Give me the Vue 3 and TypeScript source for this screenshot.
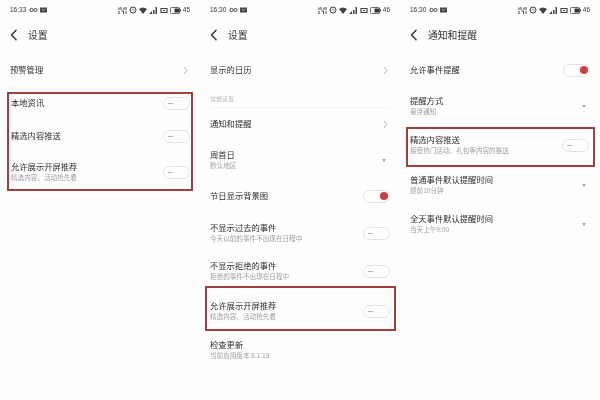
<script setup lang="ts">
type Kind = 'chev' | 'drop' | 'off' | 'on' | 'none'
interface Row { t: string; s?: string; k: Kind; h: number }
interface Phone {
  time: string; batt: string; title: string; cls: string
  before: (Row | { section: string })[]
  box: Row[]
  after: (Row | { section: string })[]
}
const phones: Phone[] = [
  {
    time: '16:33', batt: '45', title: '设置', cls: 'p1',
    before: [{ t: '预警管理', k: 'chev', h: 36 }],
    box: [
      { t: '本地资讯', k: 'off', h: 18 },
      { t: '精选内容推送', k: 'off', h: 48 },
      { t: '允许展示开屏推荐', s: '精选内容、活动抢先看', k: 'off', h: 25 }
    ],
    after: []
  },
  {
    time: '16:30', batt: '46', title: '设置', cls: 'p2',
    before: [
      { t: '显示的日历', k: 'chev', h: 36 },
      { section: '常规设置' },
      { t: '通知和提醒', k: 'chev', h: 28 },
      { t: '周首日', s: '默认地区', k: 'drop', h: 44 },
      { t: '节日显示背景图', k: 'on', h: 28 },
      { t: '不显示过去的事件', s: '今天以前的事件不出现在日程中', k: 'off', h: 46 },
      { t: '不显示拒绝的事件', s: '拒绝的事件不出现在日程中', k: 'off', h: 30 }
    ],
    box: [{ t: '允许展示开屏推荐', s: '精选内容、活动抢先看', k: 'off', h: 36 }],
    after: [{ t: '检查更新', s: '当前应用版本 8.1.18', k: 'none', h: 39 }]
  },
  {
    time: '16:30', batt: '46', title: '通知和提醒', cls: 'p3',
    before: [
      { t: '允许事件提醒', k: 'on', h: 36 },
      { t: '提醒方式', s: '悬浮通知', k: 'drop', h: 36 }
    ],
    box: [{ t: '精选内容推送', s: '接受热门活动、礼包等内容的推送', k: 'off', h: 33 }],
    after: [
      { t: '普通事件默认提醒时间', s: '提前10分钟', k: 'drop', h: 36 },
      { t: '全天事件默认提醒时间', s: '当天上午9:00', k: 'drop', h: 42 }
    ]
  }
]
const isSection = (r: Row | { section: string }): r is { section: string } => 'section' in r
const asRow = (r: Row | { section: string }) => r as Row
const asSection = (r: Row | { section: string }) => (r as { section: string }).section
</script>

<template>
  <div class="screen">
    <section v-for="p in phones" :key="p.cls" class="phone" :class="p.cls">
      <div class="status">
        <span class="time">{{ p.time }}</span>
        <svg width="9" height="6" viewBox="0 0 9 6" class="inf"><path d="M4.500 3C3.500 1 1 .7 1 3s2.500 2 3.500 0 3.500-2 3.500 0-2.500 2-3.500 0" fill="none" stroke="#333" stroke-width="1"/></svg>
        <svg width="7" height="6" viewBox="0 0 7 6"><path d="M0 .5h7v5H0z" fill="#444"/><path d="M1.500 2 3.500 3.500 5.500 2" fill="none" stroke="#ddd" stroke-width=".6"/></svg>
        <span class="spring"></span>
        <svg width="9" height="7" viewBox="0 0 9 7"><path d="M1 .5v2.500M3 0v3M6 .5v2.500M8 0v3M1 4v3M3.500 4h2v3M8 4v3" fill="none" stroke="#444"/></svg>
        <svg width="8" height="8" viewBox="0 0 8 8"><circle cx="4" cy="4" r="3" fill="none" stroke="#444"/><path d="M4 2.500V4.200H5.500" fill="none" stroke="#444" stroke-width=".7"/></svg>
        <svg width="8" height="7" viewBox="0 0 8 7"><path d="M0 2a6 6 0 0 1 8 0L4 7z" fill="#444"/></svg>
        <svg width="9" height="7" viewBox="0 0 9 7"><path d="M0 7l3-3v3zM4 3v4h1.500V3zM6.500 0v7H8V0z" fill="#444"/></svg>
        <svg width="8" height="7" viewBox="0 0 8 7"><path d="M1 1.500h6v4H1z" fill="none" stroke="#444" stroke-width="1.200"/><path d="M3 3h2v1H3z" fill="#444"/></svg>
        <svg width="11" height="7" viewBox="0 0 11 7"><rect x=".5" y=".5" width="9" height="6" rx="1" fill="none" stroke="#444" stroke-width=".8"/><rect x="4.500" y="1.500" width="5" height="4" fill="#333"/><rect x="10" y="2.500" width="1" height="2" fill="#444"/></svg>
        <span class="batt">{{ p.batt }}</span>
      </div>
      <header class="head">
        <svg width="8" height="12" viewBox="0 0 8 12"><path d="M6.500 .8 1.500 6l5 5.200" fill="none" stroke="#333" stroke-width="1.400"/></svg>
        <h1>{{ p.title }}</h1>
      </header>

      <template v-for="(r, i) in p.before" :key="'b' + i">
        <div v-if="isSection(r)" class="section">{{ asSection(r) }}</div>
        <div v-else class="row" :style="{ height: asRow(r).h + 'px' }">
          <div class="txt"><div class="t">{{ asRow(r).t }}</div><div v-if="asRow(r).s" class="s">{{ asRow(r).s }}</div></div>
          <svg v-if="asRow(r).k === 'chev'" class="chev" width="5" height="9" viewBox="0 0 5 9"><path d="M.8.800 4 4.500.8 8.200" fill="none" stroke="#aaa" stroke-width=".9"/></svg>
          <svg v-else-if="asRow(r).k === 'drop'" class="drop" width="4" height="3" viewBox="0 0 4 3"><path d="M0 0h4L2 3z" fill="#aaa"/></svg>
          <span v-else-if="asRow(r).k !== 'none'" class="toggle" :class="asRow(r).k"><i></i></span>
        </div>
      </template>

      <div class="box">
        <div v-for="r in p.box" :key="r.t" class="row" :style="{ height: r.h + 'px' }">
          <div class="txt"><div class="t">{{ r.t }}</div><div v-if="r.s" class="s">{{ r.s }}</div></div>
          <span class="toggle off"><i></i></span>
        </div>
      </div>

      <template v-for="(r, i) in p.after" :key="'a' + i">
        <div class="row" :style="{ height: asRow(r).h + 'px' }">
          <div class="txt"><div class="t">{{ asRow(r).t }}</div><div v-if="asRow(r).s" class="s">{{ asRow(r).s }}</div></div>
          <svg v-if="asRow(r).k === 'drop'" class="drop" width="4" height="3" viewBox="0 0 4 3"><path d="M0 0h4L2 3z" fill="#aaa"/></svg>
        </div>
      </template>
    </section>
  </div>
</template>

<style>
html, body { margin: 0; background: #fff; }
</style>

<style scoped>
.screen {
  display: flex;
  width: 600px;
  height: 400px;
  overflow: hidden;
  background: #fefefe;
  font-family: "Noto Sans CJK SC", "Liberation Sans", sans-serif;
  filter: blur(0.45px);
}
.phone { width: 200px; flex: none; display: flex; flex-direction: column; }
.status {
  height: 20px;
  padding: 0 10px;
  display: flex;
  align-items: center;
  gap: 2px;
  box-sizing: border-box;
  font: 6.500px/20px "Liberation Sans", sans-serif;
  color: #333;
}
.inf { margin-left: 1px; }
.spring { flex: 1; }
.head {
  height: 32px;
  padding-left: 10px;
  display: flex;
  align-items: center;
  gap: 10px;
  padding-bottom: 2px;
  box-sizing: border-box;
}
.head h1 { margin: 0; font-size: 9.800px; font-weight: 400; color: #333; }
.row {
  display: flex;
  align-items: center;
  justify-content: space-between;
  padding: 0 10px;
  box-sizing: border-box;
  flex: none;
}
.txt { display: flex; flex-direction: column; gap: 1px; margin-top: -2px; }
.t { font-size: 8.300px; line-height: 10px; color: #2e2e2e; white-space: nowrap; }
.s { font-size: 6.600px; line-height: 10px; color: #a0a0a0; white-space: nowrap; }
.section {
  height: 20px;
  margin: 0 10px 2px;
  padding-top: 6px;
  box-sizing: border-box;
  font-size: 6px;
  line-height: 10px;
  color: #bbb;
  border-bottom: 1px solid #f3f3f3;
}
.chev { margin-right: 2px; }
.drop { margin-right: 4px; }
.toggle {
  width: 27px;
  height: 13px;
  box-sizing: border-box;
  border: 1px solid #e2e2e2;
  border-radius: 7px;
  background: #fff;
  display: flex;
  align-items: center;
  padding: 0 4px;
  flex: none;
}
.toggle.off i { width: 5px; height: 1px; background: #b5b5b5; }
.toggle.on { justify-content: flex-end; padding: 0 1px; }
.toggle.on i { width: 8px; height: 8px; border-radius: 50%; background: #c9403f; }
.box {
  border: 2px solid #a03f3b;
  box-sizing: border-box;
  flex: none;
}
.p1 .box { margin: 4px 7px 0; height: 99px; padding-bottom: 4px; }
.p1 .box .row { padding: 0 1px 0 2px; }
.p2 .box { margin: 0 4px 0 5px; height: 45px; padding-top: 5px; }
.p2 .box .row { padding: 0 4px 0 3px; }
.p3 .box { margin: 3px 5px 0 6px; height: 40px; padding-bottom: 3px; }
.p3 .box .row { padding: 0 4px 0 2px; }
</style>
